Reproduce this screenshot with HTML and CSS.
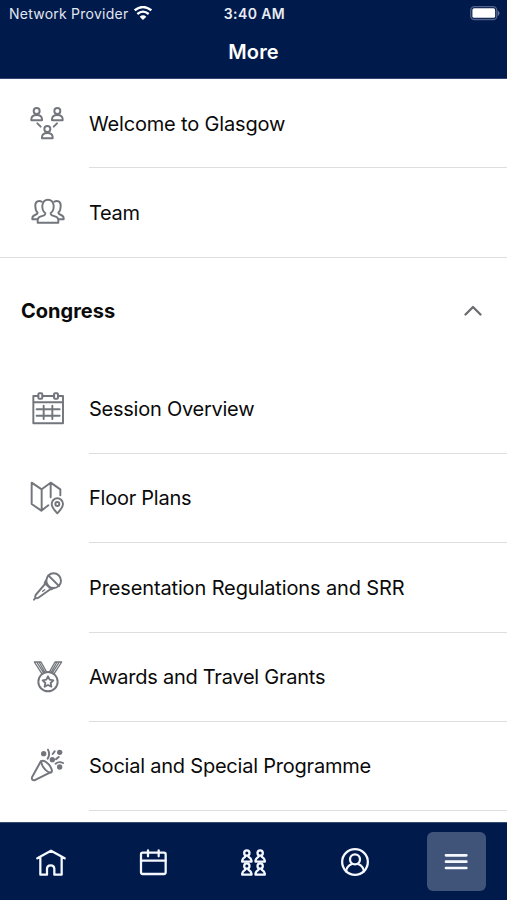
FILE: index.html
```html
<!DOCTYPE html>
<html lang="en">
<head>
<meta charset="utf-8">
<title>More</title>
<link rel="stylesheet" href="styles.css">
</head>
<body>
<div class="app">
  <header class="header">
    <div class="status">
      <div class="carrier"><span class="provider">Network Provider</span>
        <svg class="wifi" viewBox="0 0 54 42"><g fill="none" stroke="#fff" stroke-width="7"><path d="M2 13Q27-7 52 13"/><path d="M10 24Q27 10 44 24"/></g><path d="M17 32Q27 24 37 32L27 42Z" fill="#fff"/></svg>
      </div>
      <span class="time">3:40 AM</span>
      <svg class="battery" viewBox="0 0 92 44"><rect x="2" y="2" width="79" height="39" rx="11" fill="none" stroke="#52628a" stroke-width="4"/><rect x="7" y="7" width="69" height="29" rx="5" fill="#fff"/><path d="M85 15q7 7 0 14z" fill="#6a789b" stroke="#6a789b" stroke-width="2"/></svg>
    </div>
    <h1 class="title">More</h1>
  </header>
  <main class="list">
    <a class="row">
      <svg class="icon" viewBox="0 0 180 180"><g id="person"><circle cx="50" cy="48" r="9"/><path d="M34 76v-4q1-12 16-12t16 12v4z"/></g><use href="#person" x="62"/><use href="#person" x="32" y="54"/><path d="M52 85l10 10M111 85L101 95"/></svg>
      <span class="label l-welcome">Welcome to Glasgow</span>
    </a>
    <a class="row full">
      <svg class="icon" viewBox="0 -2 180 180"><path d="M53 114v-8q0-7 8-10l11-4q4-2 4-6-10-8-9-24 2-17 17-17t17 17q1 16-9 24 0 4 4 6l11 4q8 3 8 10v8z"/><path d="M65 51q-7-4-14 0-6 4-5 14 0 13 7 19-1 4-8 7-8 3-8 10v3h12M103 51q7-4 14 0 6 4 5 14 0 13-7 19 1 4 8 7 8 3 8 10v3h-12"/></svg>
      <span class="label l-team">Team</span>
    </a>
    <section>
      <div class="section">
        <h2 class="section-title">Congress</h2>
        <svg class="chevron" viewBox="0 0 18 11"><path d="M1.5 9.5L9 2l7.5 7.5"/></svg>
      </div>
      <a class="row">
        <svg class="icon" viewBox="0 3 180 180"><path d="M55 48H40v82h89V48h-14M67 48h36M40 67h89M50 88h69M50 107h69M71 77v40M97 77v40"/><rect x="55" y="40" width="12" height="16" rx="3"/><rect x="102" y="40" width="12" height="16" rx="3"/></svg>
        <span class="label l-session">Session Overview</span>
      </a>
      <a class="row">
        <svg class="icon" viewBox="0 0 180 180"><path d="M85 106l-21 16-29-20V38l30 20 27-20 29 20v18M65 58v63M92 38v44"/><path d="M112 130q-17-18-17-28a17 17 0 0 1 34 0q0 10-17 28z"/><circle cx="112" cy="102" r="6"/></svg>
        <span class="label l-floor">Floor Plans</span>
      </a>
      <a class="row">
        <svg class="icon" viewBox="0 -3 180 180"><circle cx="101" cy="62" r="22"/><path d="M85 46l32 32M76 71L47 105q-3 5 0 8 4 3 8 0L92 87M78 61l-4 8 20 19 8-4M47 113l-5 6"/><path class="fine" d="M68 94l6-5"/></svg>
        <span class="label l-presentation">Presentation Regulations and SRR</span>
      </a>
      <a class="row">
        <svg class="icon" viewBox="0 0 180 180"><circle cx="84" cy="101" r="29"/><path d="M84 85l5 10 11 2-8 8 2 11-10-5-10 5 2-11-8-8 11-2z"/><path class="fine" d="M65 76L43 42h20l16 29M50 42l20 31M57 42l17 30M103 76l22-34h-20L89 71M118 42L98 73M111 42L94 72"/></svg>
        <span class="label l-awards">Awards and Travel Grants</span>
      </a>
      <a class="row">
        <svg class="icon" viewBox="0 0 180 180"><path d="M63 72L36 121q-2 9 7 9l48-24"/><ellipse cx="80" cy="89" rx="9" ry="22" transform="rotate(-40 80 89)"/><path d="M84 38q7 15-1 27M98 51l6-8M108 67l8-7M107 80q10-8 22-2"/><g class="dots"><circle cx="71" cy="50" r="8"/><circle cx="119" cy="46" r="8"/><circle cx="97" cy="68" r="8"/><circle cx="119" cy="90" r="8"/></g></svg>
        <span class="label l-social">Social and Special Programme</span>
      </a>
    </section>
  </main>
  <nav class="tabs">
    <a class="tab"><svg class="tab-icon" viewBox="108 140 90 90"><path d="M112 174l41-23 41 23M121 171v52h20v-17q0-11 11-11t11 11v17h22v-52"/></svg></a>
    <a class="tab"><svg class="tab-icon" viewBox="411 140 90 90"><rect x="423" y="157" width="74" height="64" rx="5"/><path d="M423 181h74M444 150v18M476 150v18"/></svg></a>
    <a class="tab"><svg class="tab-icon" viewBox="715.5 140 90 90"><g id="member"><circle cx="742" cy="158" r="8"/><path d="M728 184v-3q1-7 8-11l2-3M756 184v-3q-1-7-8-11l-2-3M728 184h28"/></g><use href="#member" x="40"/><use href="#member" y="39"/><use href="#member" x="40" y="39"/></svg></a>
    <a class="tab"><svg class="tab-icon" viewBox="258 140 90 90"><circle cx="303" cy="185" r="38.5"/><circle cx="303" cy="177" r="15"/><path d="M276 213q2-16 18-22M330 213q-2-16-18-22"/></svg></a>
    <a class="tab"><span class="active"><svg class="tab-icon menu" viewBox="562 140 90 90"><path d="M577 165h61M577 184h61M577 203h61"/></svg></span></a>
  </nav>
</div>
</body>
</html>
```
FILE: styles.css
```css
* { box-sizing: border-box; }
body { margin: 0; font-family: Inter, "Liberation Sans", sans-serif; background: #fff; color: #0a0a0a; }
.app { height: 900px; display: flex; flex-direction: column; overflow: hidden; }
.header { height: 79px; flex: none; background: #001a4b; color: #fff; border-bottom: 1px solid #33466f; }
.status { height: 27px; padding: 0 7px 0 9px; display: grid; grid-template-columns: 1fr auto 1fr; align-items: center; }
.carrier { display: flex; align-items: center; gap: 6px; }
.provider { font-size: 14px; letter-spacing: .24px; white-space: nowrap; color: #e1e6f0; }
.wifi { width: 18px; height: 14px; margin-top: -1px; }
.time { font-size: 14px; font-weight: 600; letter-spacing: .4px; color: #e8ecf4; }
.battery { width: 30.5px; height: 14.5px; justify-self: end; }
.title { margin: 0; text-align: center; font-size: 20px; line-height: 24px; padding-top: 13px; font-weight: 600; letter-spacing: .1px; }
.list { flex: 1; min-height: 0; overflow: hidden; padding-top: .3px; }
.row { height: 89.15px; display: flex; padding-left: 20px; }
.icon { width: 60px; height: 60px; flex: none; margin: 15.7px 9px 0 0; fill: none; stroke: #72767c; stroke-width: 5.8; stroke-linecap: round; stroke-linejoin: round; }
.fine { stroke-width: 4; }
.dots { fill: #72767c; stroke: none; }
.label { flex: 1; display: flex; align-items: center; padding-top: .3px; border-bottom: 1.5px solid #dedede; font-size: 20px; white-space: nowrap; }
.l-welcome { letter-spacing: -.17px; }
.l-team { letter-spacing: -.35px; }
.l-session { letter-spacing: -.25px; }
.l-floor { letter-spacing: -.25px; }
.l-presentation { letter-spacing: -.13px; }
.l-awards { letter-spacing: -.25px; }
.l-social { letter-spacing: -.22px; }
.full { border-bottom: 1.5px solid #dedede; }
.full .label { border: 0; }
.section { height: 107.5px; display: flex; align-items: center; justify-content: space-between; padding: 0 25px 1px 21px; }
.section-title { margin: 0; font-size: 20px; font-weight: 700; }
.chevron { width: 18px; height: 11px; fill: none; stroke: #6c6d70; stroke-width: 2.3; stroke-linecap: round; stroke-linejoin: round; }
.tabs { height: 78px; flex: none; display: grid; grid-template-columns: repeat(5, 1fr); background: #001a4b; border-top: 1px solid #335074; }
.tab { display: flex; align-items: center; justify-content: center; }
.tab-icon { width: 30px; height: 30px; fill: none; stroke: #f5f8ff; stroke-width: 6.8; stroke-linecap: round; stroke-linejoin: round; }
.menu { stroke-width: 8; }
.active { width: 59px; height: 59px; border-radius: 6px; background: #405479; display: flex; align-items: center; justify-content: center; }
```
